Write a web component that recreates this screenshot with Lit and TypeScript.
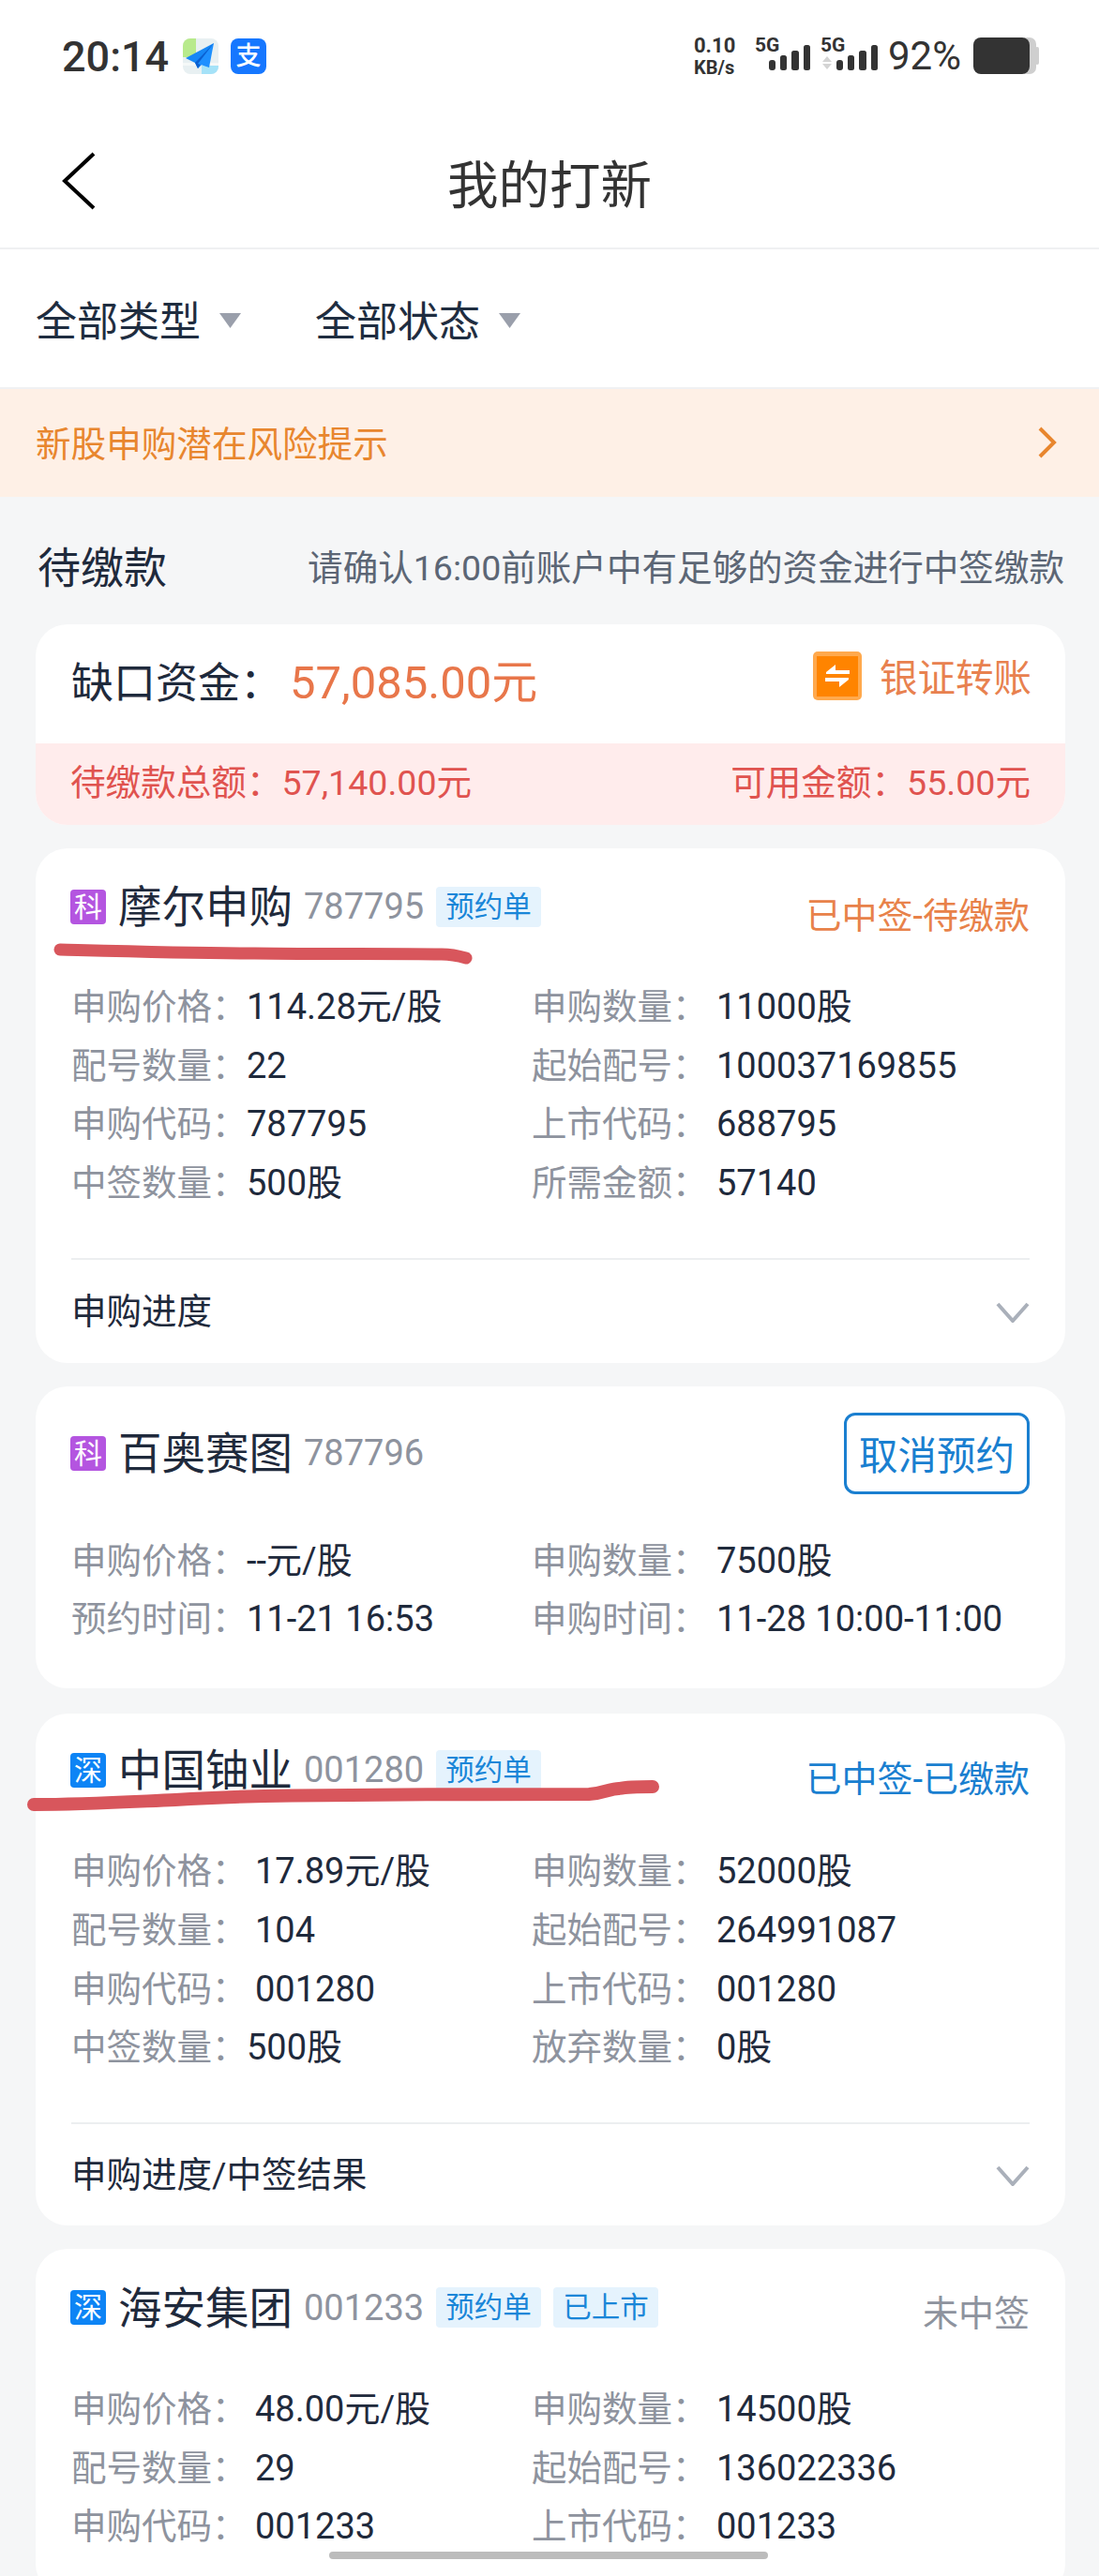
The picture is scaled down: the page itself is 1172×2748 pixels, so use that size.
import { LitElement, html, css, svg } from "lit";
import { customElement } from "lit/decorators.js";

type Row = [string, string, boolean?];
interface Card {
  badge: string;
  name: string;
  code: string;
  tags: string[];
  status?: string;
  statusCls?: string;
  cancel?: boolean;
  wide?: boolean;
  rows: Row[];
  foot?: string;
}

const cards: Card[] = [
  {
    badge: "科", name: "摩尔申购", code: "787795", tags: ["预约单"], status: "已中签-待缴款", statusCls: "orange",
    rows: [["申购价格：", "114.28元/股"], ["申购数量：", "11000股"], ["配号数量：", "22"], ["起始配号：", "100037169855"],
      ["申购代码：", "787795"], ["上市代码：", "688795"], ["中签数量：", "500股"], ["所需金额：", "57140"]],
    foot: "申购进度",
  },
  {
    badge: "科", name: "百奥赛图", code: "787796", tags: [], cancel: true,
    rows: [["申购价格：", "--元/股"], ["申购数量：", "7500股"], ["预约时间：", "11-21 16:53"], ["申购时间：", "11-28 10:00-11:00"]],
  },
  {
    badge: "深", name: "中国铀业", code: "001280", tags: ["预约单"], status: "已中签-已缴款", statusCls: "blue", wide: true,
    rows: [["申购价格：", "17.89元/股"], ["申购数量：", "52000股"], ["配号数量：", "104"], ["起始配号：", "264991087"],
      ["申购代码：", "001280"], ["上市代码：", "001280"], ["中签数量：", "500股", true], ["放弃数量：", "0股"]],
    foot: "申购进度/中签结果",
  },
  {
    badge: "深", name: "海安集团", code: "001233", tags: ["预约单", "已上市"], status: "未中签", statusCls: "gray", wide: true,
    rows: [["申购价格：", "48.00元/股"], ["申购数量：", "14500股"], ["配号数量：", "29"], ["起始配号：", "136022336"],
      ["申购代码：", "001233"], ["上市代码：", "001233"]],
  },
];

const bars = (x: number) => svg`
  <rect x="${x}" y="28" width="7" height="11" rx="3"/>
  <rect x="${x + 12}" y="23" width="7" height="16" rx="2.5"/>
  <rect x="${x + 24}" y="18" width="8" height="21" rx="2.5"/>
  <rect x="${x + 37}" y="12" width="7" height="27" rx="2.5"/>`;

@customElement("app-root")
export class AppRoot extends LitElement {
  static styles = css`
    :host {
      display: block;
      position: relative;
      width: 1172px;
      height: 2748px;
      overflow: hidden;
      background: #f5f6f7;
      font-family: Roboto, "Noto Sans CJK SC", sans-serif;
      color: #1f2a3c;
    }
    .status {
      height: 128px;
      box-sizing: border-box;
      padding: 36px 64px 0 66px;
      background: #fff;
      display: flex;
      justify-content: space-between;
      align-items: flex-start;
    }
    .left { display: flex; align-items: flex-start; }
    .time { font-size: 45px; line-height: 50px; font-weight: 500; color: #333; width: 129px; }
    .app { width: 38px; height: 38px; margin: 5px 13px 0 0; display: block; }
    .ali {
      width: 38px; height: 38px; margin-top: 5px; border-radius: 8px; background: #1677ff; color: #fff;
      font-size: 27px; line-height: 38px; text-align: center; font-weight: 500;
    }
    .right { display: flex; align-items: flex-start; color: #333; }
    .net { width: 65px; padding-top: 2px; font-weight: 700; line-height: 1; }
    .net div:first-child { font-size: 22px; height: 24px; }
    .net div:last-child { font-size: 20px; }
    .sig { display: block; fill: #333; }
    .sig text { font: 700 21px Roboto, sans-serif; }
    .sig1 { width: 70px; height: 44px; }
    .sig2 { width: 72px; height: 44px; }
    .pct { width: 91px; font-size: 42px; line-height: 48px; font-weight: 400; color: #333; }
    .bat { width: 70px; height: 44px; display: block; margin-top: 4px; }

    .nav {
      height: 138px; box-sizing: border-box; background: #fff; border-bottom: 2px solid #eff0f2; padding-top: 3px;
      display: flex; align-items: center; justify-content: center; position: relative;
    }
    .nav h1 { margin: 0; font-size: 54.5px; line-height: 70px; font-weight: 400; color: #333; }
    .back { position: absolute; left: 64px; top: 33px; width: 40px; height: 64px; }

    .filters {
      height: 149px; box-sizing: border-box; background: #fff; border-bottom: 2px solid #f0f1f3;
      display: flex; align-items: center; padding-left: 38px;
    }
    .filter { display: flex; align-items: center; font-size: 44px; width: 298px; color: #1f2d40; }
    .tri { width: 23px; height: 16px; margin: 4px 0 0 20px; fill: #9a9fab; }

    .banner {
      height: 115px; box-sizing: border-box; background: #fef0e6; color: #e8862e; font-size: 37.6px;
      display: flex; align-items: center; justify-content: space-between; padding: 0 44px 2px 38px;
    }
    .banner span { margin-top: -2px; }
    .banner svg { width: 22px; height: 34px; }

    .section {
      height: 136px; box-sizing: border-box; padding: 8px 37px 0 40px;
      display: flex; align-items: center; justify-content: space-between;
    }
    .section h2 { margin: 0; font-size: 46px; font-weight: 400; color: #1f2a3c; }
    .section span { font-size: 37.55px; color: #5c6675; }

    .wrap { padding: 0 36px 0 38px; display: flex; flex-direction: column; gap: 25px; }
    .card { background: #fff; border-radius: 34px; overflow: hidden; }
    .card.tall { margin-bottom: 2px; }

    .gap-top {
      height: 127px; box-sizing: border-box; display: flex; align-items: center; justify-content: space-between;
      padding: 0 36px 12px 38px;
    }
    .gap-l { display: flex; align-items: baseline; font-size: 45px; white-space: nowrap; }
    .gap-l b { font-weight: 400; color: #e8764a; font-size: 49px; }
    .gap-lbl { width: 233px; color: #1f2a3c; }
    .transfer { display: flex; align-items: center; font-size: 40.5px; color: #e8814f; margin-top: -6px; }
    .transfer svg { width: 52px; height: 52px; margin-right: 19px; }
    .gap-bot {
      height: 87px; background: #ffecec; color: #e0534f; font-size: 37.6px; padding-bottom: 10px; box-sizing: border-box;
      display: flex; align-items: center; justify-content: space-between; padding-left: 37px; padding-right: 37px;
    }

    .head {
      height: 96px; padding-top: 14px; display: flex; align-items: center; justify-content: space-between;
      padding-left: 37px; padding-right: 38px; margin-bottom: 28px;
    }
    .tall .head { height: 87px; padding-top: 28px; margin-bottom: 40px; }
    .wide .head { padding-top: 12px; margin-bottom: 29px; }
    .card:last-child .head { padding-top: 15px; }
    .card:last-child .st { margin-top: 6px; }
    .ht { display: flex; align-items: center; }
    .badge {
      width: 38px; height: 37px; border-radius: 4px; color: #fff; font-size: 30px; line-height: 37px; text-align: center;
    }
    .badge.ke { background: #b455e0; }
    .badge.sz { background: #0d84f5; }
    .name { font-size: 46.5px; color: #1f2a3c; margin: 0 0 0 13px; width: 198px; line-height: 60px; position: relative; top: 1px; }
    .code { font-size: 38px; color: #8e939e; width: 141px; }
    .tag {
      width: 112px; height: 43px; border-radius: 4px; background: #e5f3fd; color: #1a86d8; font-size: 30.5px;
      line-height: 43px; text-align: center; margin-right: 13px;
    }
    .st { font-size: 38px; margin-top: 12px; }
    .st.orange { color: #e8824a; }
    .st.blue { color: #1a7fd0; }
    .st.gray { color: #8e939e; }
    .cancel {
      width: 198px; height: 87px; box-sizing: border-box; border: 3px solid #1a7fd0; border-radius: 12px; color: #1a7fd0;
      font-size: 41.5px; display: flex; align-items: center; justify-content: center;
    }

    .grid {
      display: grid; grid-template-columns: 187px 304px 197px 1fr; padding-left: 38px;
      font-size: 37.5px; line-height: 62.7px; grid-auto-rows: 62.7px;
    }
    .wide .grid { grid-template-columns: 196px 295px 197px 1fr; }
    .l { color: #8e939e; white-space: nowrap; }
    .v { color: #1f2a3c; white-space: nowrap; font-size: 38px; }
    .v.tight { margin-left: -9px; }

    .foot {
      margin: 48px 38px 0; height: 112px; box-sizing: border-box; border-top: 2px solid #eceef0;
      display: flex; align-items: center; justify-content: space-between; font-size: 37.5px; color: #1f2a3c;
    }
    .foot span { margin-top: -6px; }
    .wide .foot { height: 110px; }
    .foot svg { width: 36px; height: 22px; margin-top: 2px; }
    .pad { height: 42px; }

    .ink { position: absolute; left: 0; top: 0; width: 1172px; height: 2748px; pointer-events: none; }
    .home { position: absolute; left: 351px; top: 2722px; width: 468px; height: 8px; border-radius: 4px; background: #bcbcbc; }
  `;

  private renderCard(c: Card) {
    return html`
      <div class="card ${c.cancel ? "tall" : ""} ${c.wide ? "wide" : ""}">
        <div class="head">
          <div class="ht">
            <div class="badge ${c.badge === "科" ? "ke" : "sz"}">${c.badge}</div>
            <div class="name">${c.name}</div>
            <div class="code">${c.code}</div>
            ${c.tags.map((t) => html`<div class="tag">${t}</div>`)}
          </div>
          ${c.cancel ? html`<div class="cancel">取消预约</div>` : html`<div class="st ${c.statusCls}">${c.status}</div>`}
        </div>
        <div class="grid">
          ${c.rows.map((r) => html`<div class="l">${r[0]}</div><div class="v ${r[2] ? "tight" : ""}">${r[1]}</div>`)}
        </div>
        ${c.foot
          ? html`<div class="foot"><span>${c.foot}</span>
              <svg viewBox="0 0 36 22"><path d="M2 2 L18 20 L34 2" fill="none" stroke="#aab0ba" stroke-width="4"/></svg></div>`
          : html`<div class="pad"></div>`}
      </div>`;
  }

  render() {
    return html`
      <div class="status">
        <div class="left">
          <div class="time">20:14</div>
          <svg class="app" viewBox="0 0 38 38">
            <defs><clipPath id="ac"><rect width="38" height="38" rx="8"/></clipPath></defs>
            <g clip-path="url(#ac)">
              <rect width="38" height="38" fill="#e8f0f2"/>
              <rect width="14" height="20" fill="#b8ea8c"/>
              <rect x="20" y="28" width="18" height="10" fill="#a5e2f8"/>
              <rect y="26" width="38" height="3" fill="#f5f8f8"/>
              <path d="M33 5 L3 21 L13 26 L16 32 L21 27 Z" fill="#1687f5"/>
              <path d="M33 5 L13 26 L16 32 Z" fill="#0a5fd0"/>
              <path d="M33 5 L16 27 L28 31 Z" fill="#1e90ff"/>
            </g>
          </svg>
          <div class="ali">支</div>
        </div>
        <div class="right">
          <div class="net"><div>0.10</div><div>KB/s</div></div>
          <svg class="sig sig1" viewBox="0 0 70 44"><text x="0" y="19">5G</text>${bars(15)}</svg>
          <svg class="sig sig2" viewBox="0 0 72 44">
            <text x="0" y="19">5G</text>
            <path d="M2 30 L7 24 L12 30 Z M2 32 L12 32 L7 38 Z" fill="#d4d4d4"/>
            ${bars(17)}
          </svg>
          <div class="pct">92%</div>
          <svg class="bat" viewBox="0 0 70 44">
            <rect x="50" y="0" width="17" height="39" rx="7" fill="#cfcfcf"/>
            <rect x="66" y="10" width="4" height="19" rx="2" fill="#cfcfcf"/>
            <rect x="0" y="0" width="60" height="39" rx="8" fill="#333"/>
          </svg>
        </div>
      </div>

      <div class="nav">
        <svg class="back" viewBox="0 0 40 64"><path d="M36 3 L5 32 L36 61" fill="none" stroke="#000" stroke-width="4"/></svg>
        <h1>我的打新</h1>
      </div>

      <div class="filters">
        <div class="filter">全部类型<svg class="tri" viewBox="0 0 23 16"><path d="M0 0 H23 L11.5 16 Z"/></svg></div>
        <div class="filter">全部状态<svg class="tri" viewBox="0 0 23 16"><path d="M0 0 H23 L11.5 16 Z"/></svg></div>
      </div>

      <div class="banner">
        <span>新股申购潜在风险提示</span>
        <svg viewBox="0 0 22 34"><path d="M3 2 L18 17 L3 32" fill="none" stroke="#e8862e" stroke-width="4"/></svg>
      </div>

      <div class="section"><h2>待缴款</h2><span>请确认16:00前账户中有足够的资金进行中签缴款</span></div>

      <div class="wrap">
        <div class="card">
          <div class="gap-top">
            <div class="gap-l"><span class="gap-lbl">缺口资金：</span><b>57,085.00元</b></div>
            <div class="transfer">
              <svg viewBox="0 0 52 52">
                <rect width="52" height="52" rx="5" fill="#ffa94d"/>
                <rect x="4" y="5" width="44" height="43" fill="#ff8400"/>
                <path d="M14 22 L24 14 V20 H39 V24 H14 Z M38 30 L28 38 V32 H13 V28 H38 Z" fill="#fff"/>
              </svg>
              银证转账
            </div>
          </div>
          <div class="gap-bot"><span>待缴款总额：57,140.00元</span><span>可用金额：55.00元</span></div>
        </div>
        ${cards.map((c) => this.renderCard(c))}
      </div>

      <svg class="ink" viewBox="0 0 1172 2748">
        <path d="M64 1013 C140 1015 210 1017 271 1017 C350 1018 420 1017 471 1018 C480 1018 490 1020 497 1022"
          fill="none" stroke="#d8565c" stroke-width="13" stroke-linecap="round"/>
        <path d="M36 1925 C90 1925 140 1922 187 1920 C250 1916 310 1915 374 1915 C460 1914 560 1914 628 1914 C645 1913 650 1908 660 1908 C670 1906 680 1906 696 1906"
          fill="none" stroke="#d8565c" stroke-width="14" stroke-linecap="round"/>
      </svg>
      <div class="home"></div>
    `;
  }
}
